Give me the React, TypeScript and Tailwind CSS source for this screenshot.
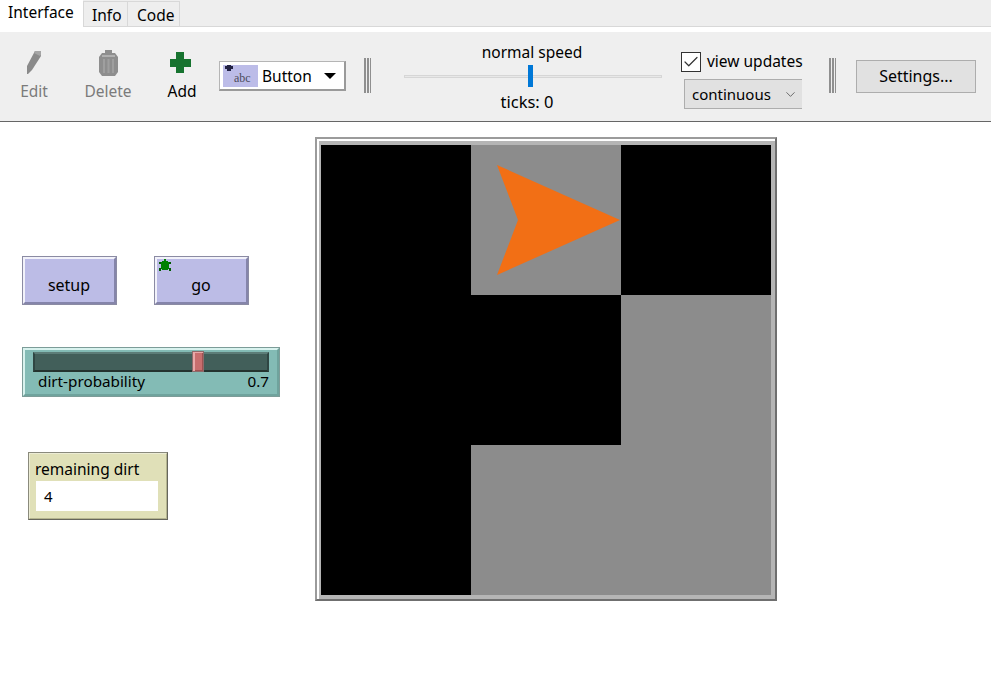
import { Check, ChevronDown } from 'lucide-react'

const CELLS = [
  'bg-black', 'bg-[#8c8c8c]', 'bg-black',
  'bg-black', 'bg-black', 'bg-[#8c8c8c]',
  'bg-black', 'bg-[#8c8c8c]', 'bg-[#8c8c8c]',
]

function Grip() {
  return (
    <div className="flex h-[35px] w-[7px] justify-between">
      <div className="w-[2px] bg-[#8f8f8f]" />
      <div className="w-[2px] bg-[#8f8f8f]" />
      <div className="w-[1px] bg-[#8f8f8f]" />
    </div>
  )
}

function ToolButton({ label, dim, children }: { label: string; dim?: boolean; children: React.ReactNode }) {
  return (
    <div className={`flex w-[68px] flex-col items-center pt-[18px] text-[15.5px] leading-[20px] ${dim ? 'text-[#7b7b7b]' : 'text-black'}`}>
      <div className="mb-[7px] h-[24px]">{children}</div>
      <span>{label}</span>
    </div>
  )
}

function WidgetButton({ label, turtle, className }: { label: string; turtle?: boolean; className: string }) {
  return (
    <div className={`absolute h-[49px] w-[95px] border border-[#8b8ba3] ${className}`}>
      <div className="relative flex h-full items-center justify-center border-2 border-t-[#f2f2fa] border-l-[#f2f2fa] border-r-[#8585aa] border-b-[#8585aa] bg-[#bcbce6] pr-[1px] pt-[8px] text-[16px] text-black">
        {turtle && (
          <svg className="absolute left-[1px] top-0" width="14" height="14" viewBox="0 0 14 14">
            <path d="M6 0h2v2h2v1h1v7h-1v1H4v-1H3V3h1V2h2z" fill="#008000" />
            <path d="M1 3h2v2H1zM11 3h2v2h-2zM1 9h2v3H1zM11 9h2v3h-2z" fill="#005a00" />
          </svg>
        )}
        {label}
      </div>
    </div>
  )
}

export default function App() {
  return (
    <div className="relative h-[688px] w-[991px] overflow-hidden bg-white font-['Noto_Sans',sans-serif] text-black">
      {/* Tabs */}
      <div className="flex h-[27px] items-start border-b border-[#d8d8d8] bg-[#eeeeee]">
        <div className="z-10 h-[32px] w-[83px] bg-white pl-[8px] text-[15.5px] leading-[25px]">Interface</div>
        <div className="mt-px h-[26px] w-[45px] border-x border-t border-[#d8d8d8] pl-[8px] text-[15.5px] leading-[26px]">Info</div>
        <div className="mt-px h-[26px] w-[52px] border-r border-t border-[#d8d8d8] pl-[9px] text-[15.5px] leading-[26px]">Code</div>
      </div>
      <div className="h-[5px] bg-white" />

      {/* Toolbar */}
      <div className="flex h-[90px] items-start gap-[6px] border-b border-[#666666] bg-[#efefef]">
        <ToolButton label="Edit" dim>
          <svg width="16" height="24" viewBox="0 0 16 24">
            <path d="M9 1h6v5L6 20l-4 4H1v-8z" fill="#8a8a8a" />
            <path d="M9 1h6v4l-1 1-6-3z" fill="#a5a5a5" />
          </svg>
        </ToolButton>
        <ToolButton label="Delete" dim>
          <svg width="19" height="26" viewBox="0 0 19 26">
            <path d="M6 0h7v3h3l3 4v15l-3 4H3l-3-4V7l3-4h3z" fill="#8e8e8e" />
            <path d="M3 6h13" stroke="#b0b0b0" strokeWidth="2" fill="none" />
            <path d="M5 9v14M9.500 9v14M14 9v14" stroke="#9f9f9f" strokeWidth="2" fill="none" />
          </svg>
        </ToolButton>
        <ToolButton label="Add">
          <svg width="21" height="21" viewBox="0 0 21 21" className="ml-[-3px] mt-[2px]">
            <path d="M6 0h8v7h7v8h-7v6H6v-6H0V7h6z" fill="#17732f" />
          </svg>
        </ToolButton>

        {/* Widget picker */}
        <div className="ml-[-3px] mt-[29px] flex h-[30px] w-[127px] items-center border border-b-2 border-r-2 border-[#9a9a9a] border-t-[#b5b5b5] border-l-[#b5b5b5] bg-white pl-[3px]">
          <div className="relative h-[22px] w-[35px] overflow-hidden bg-[#bcbce8]">
            <svg className="absolute left-[1px] top-0" width="10" height="8" viewBox="0 0 10 8">
              <path d="M3 0h4v1h2v3H7v2H3V4H1V1h2z" fill="#222244" />
            </svg>
            <span className="absolute left-[11px] top-[6px] font-['Liberation_Serif',serif] text-[12px] leading-[14px] text-[#4c4c5c]">abc</span>
          </div>
          <span className="ml-[4px] text-[15.5px] leading-[20px]">Button</span>
          <div className="ml-[12px] h-0 w-0 border-x-[6px] border-t-[6px] border-x-transparent border-t-black" />
        </div>

        <div className="ml-[12px] mt-[26px]">
          <Grip />
        </div>

        {/* Speed slider */}
        <div className="ml-[27px] flex w-[258px] flex-col items-center pt-[9px] text-[15.5px] leading-[22px]">
          <span className="pr-[2px]">normal speed</span>
          <div className="relative mb-[3px] mt-[2px] flex h-[22px] w-full items-center">
            <div className="h-[3px] w-full border border-[#d6d6d6] bg-[#e8e8e8]" />
            <div className="absolute left-[124px] top-0 h-[22px] w-[5px] bg-[#0078d7]" />
          </div>
          <span className="mt-[1px] pr-[12px] text-[16.500px]">ticks: 0</span>
        </div>

        {/* View updates */}
        <div className="ml-[13px] flex w-[125px] flex-col pt-[20px]">
          <div className="flex items-center text-[15.5px] leading-[20px]">
            <div className="flex h-[20px] w-[20px] items-center justify-center border border-[#333333] bg-white">
              <Check size={18} strokeWidth={1.6} color="#333333" />
            </div>
            <span className="ml-[6px] mt-[-2px]">view updates</span>
          </div>
          <div className="ml-[3px] mt-[7px] flex h-[30px] w-[118px] items-center border border-r-0 border-[#adadad] bg-[#e1e1e1] pl-[7px] text-[15px]">
            continuous
            <ChevronDown size={15} strokeWidth={1.2} color="#444444" className="ml-[12px]" />
          </div>
        </div>

        <div className="ml-[17px] mt-[26px]">
          <Grip />
        </div>

        <div className="ml-[14px] mt-[28px] flex h-[33px] w-[120px] items-center justify-center border border-[#adadad] bg-[#e1e1e1] pb-[2px] text-[16px]">
          Settings...
        </div>
      </div>

      {/* Interface canvas */}
      <WidgetButton label="setup" className="left-[22px] top-[256px]" />
      <WidgetButton label="go" turtle className="left-[154px] top-[256px]" />

      <div className="absolute left-[22px] top-[347px] h-[50px] w-[258px] border border-[#7c9c98]">
        <div className="relative h-full border-2 border-t-[#d8f2ee] border-l-[#d8f2ee] border-r-[#6fa39d] border-b-[#6fa39d] bg-[#83bbb5]">
          <div className="absolute left-[8px] top-[2px] h-[20px] w-[236px] border-2 border-b-[#24332f] border-l-[#2f4643] border-r-[#2f4643] border-t-[#5c7d78] bg-[#425f5a]" />
          <div className="absolute left-[167px] top-[1px] h-[21px] w-[12px] border border-[#8f6a6a] bg-[#c86e6e] shadow-[inset_2px_1px_0_#e8a8a8,inset_-1px_-1px_0_#a05252]" />
          <div className="absolute left-[13px] right-[8px] top-[21px] flex justify-between text-[15.250px] leading-[20px]">
            <span>dirt-probability</span>
            <span>0.7</span>
          </div>
        </div>
      </div>

      <div className="absolute left-[28px] top-[452px] h-[68px] w-[140px] border border-[#8a8a7c] border-b-[#66665c] border-r-[#66665c]">
        <div className="h-full border border-[#ececd4] border-b-[#b4b48f] border-r-[#b4b48f] bg-[#e0e0b8]">
          <div className="pl-[5px] pt-[5px] text-[15.500px] leading-[20px]">remaining dirt</div>
          <div className="ml-[6px] mt-[2px] h-[30px] w-[122px] bg-white pl-[8px] text-[15px] leading-[30px]">4</div>
        </div>
      </div>

      {/* World view */}
      <div className="absolute left-[315px] top-[137px] h-[464px] w-[462px] border-2 border-t-[#9b9b9b] border-l-[#9b9b9b] border-r-[#6f6f6f] border-b-[#6f6f6f]">
        <div className="border-l-2 border-t-2 border-white">
          <div className="border-b-4 border-l-2 border-r-4 border-t-4 border-[#b5b5b5]">
            <div className="relative grid w-[450px] grid-cols-[repeat(3,150px)] grid-rows-[repeat(3,150px)]">
              {CELLS.map((c, i) => (
                <div key={i} className={c} />
              ))}
              <svg className="absolute left-[176px] top-[20px]" width="124" height="110" viewBox="0 0 124 110">
                <path d="M0 0L123 55L0 110L21 55z" fill="#f26f15" />
              </svg>
            </div>
          </div>
        </div>
      </div>
    </div>
  )
}
